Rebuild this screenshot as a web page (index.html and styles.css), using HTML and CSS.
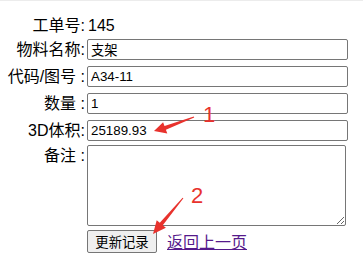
FILE: index.html
```html
<!DOCTYPE html>
<html lang="zh-CN">
<head>
    <meta charset="UTF-8">
    <meta name="viewport" content="width=device-width, initial-scale=1.0">
    <title>更新记录</title>
    <link rel="stylesheet" href="styles.css">
</head>
<body>
<div class="page">
    <form class="form">
        <div class="row row-first">
            <span class="label">工单号:</span>
            <span class="value">145</span>
        </div>
        <div class="row">
            <label class="label" for="name">物料名称:</label>
            <input class="field" id="name" type="text" value="支架">
        </div>
        <div class="row">
            <label class="label" for="code">代码/图号 :</label>
            <input class="field" id="code" type="text" value="A34-11">
        </div>
        <div class="row">
            <label class="label" for="qty">数量 :</label>
            <input class="field" id="qty" type="text" value="1">
        </div>
        <div class="row">
            <label class="label" for="vol">3D体积:</label>
            <input class="field" id="vol" type="text" value="25189.93">
        </div>
        <div class="row row-note">
            <label class="label" for="note">备注 :</label>
            <textarea class="note" id="note"></textarea>
        </div>
        <div class="row row-actions">
            <span></span>
            <div class="actions">
                <button class="btn" type="button">更新记录</button>
                <a class="back" href="#">返回上一页</a>
            </div>
        </div>
    </form>

    <!-- annotations drawn on top of the screenshot -->
    <svg class="marks" width="363" height="269" viewBox="0 0 363 269">
        <polygon points="193.8,115.5 164.5,124.9 163.1,121.2 154,130 167.3,132.4 165.9,128.7 194.2,116.5" />
        <text x="203" y="121">1</text>
        <polygon points="182.6,196.7 159.8,221.7 156.7,219.2 153,233 165.9,226.8 162.8,224.3 183.4,197.3" />
        <text x="191" y="202">2</text>
    </svg>
</div>
</body>
</html>
```

FILE: styles.css
```css
body {
    margin: 0;
    background-color: #fff;
    font-family: "Liberation Sans", "Noto Sans CJK SC", sans-serif;
    color: #000;
}
.page {
    position: relative;
    width: 363px;
    height: 268px;
    border-top: 1px solid #ececec;
    overflow: hidden;
}
.form {
    display: flex;
    flex-direction: column;
    padding-top: 11px;
}
.row {
    display: grid;
    grid-template-columns: 86px 261px;
    column-gap: 1px;
    align-items: center;
    margin-bottom: 6px;
    height: 21px;
}
/* first line has no input, its text sits a bit lower */
.row-first {
    height: 24px;
    margin-bottom: 3px;
    align-items: end;
}
.label {
    font-size: 16px;
    text-align: right;
    white-space: nowrap;
    padding-right: 1px;
    line-height: 21px;
}
.value {
    font-size: 16px;
    line-height: 21px;
    padding-left: 1px;
}
.field {
    box-sizing: border-box;
    width: 261px;
    height: 21px;
    margin: 0;
    padding: 0 3px;
    border: 1px solid #767676;
    border-radius: 2px;
    font-family: "Liberation Sans", "Noto Sans CJK SC", sans-serif;
    font-size: 13.33px;
    color: #000;
    outline: none;
}
.row-note {
    height: auto;
    align-items: start;
    margin-top: -2px;
    margin-bottom: 3px;
}
.note {
    box-sizing: border-box;
    width: 259px;
    height: 81px;
    margin: 0;
    border: 1px solid #767676;
    border-radius: 2px;
    resize: both;
    font-size: 13.33px;
}
.row-actions {
    height: auto;
}
.actions {
    display: flex;
    align-items: center;
}
.btn {
    box-sizing: border-box;
    width: 70px;
    height: 23px;
    margin: 0;
    padding: 0 6px;
    border: 1px solid #767676;
    border-radius: 2px;
    background-color: #efefef;
    font-family: "Liberation Sans", "Noto Sans CJK SC", sans-serif;
    font-size: 13.33px;
    color: #000;
}
.back {
    margin-left: 10px;
    font-size: 16px;
    color: #551a8b;
    text-decoration: underline;
}
.marks {
    position: absolute;
    top: 0;
    left: 0;
    pointer-events: none;
}
.marks polygon {
    fill: #e8322d;
}
.marks text {
    fill: #e8322d;
    font-family: "Liberation Sans", sans-serif;
    font-size: 22px;
}
```
